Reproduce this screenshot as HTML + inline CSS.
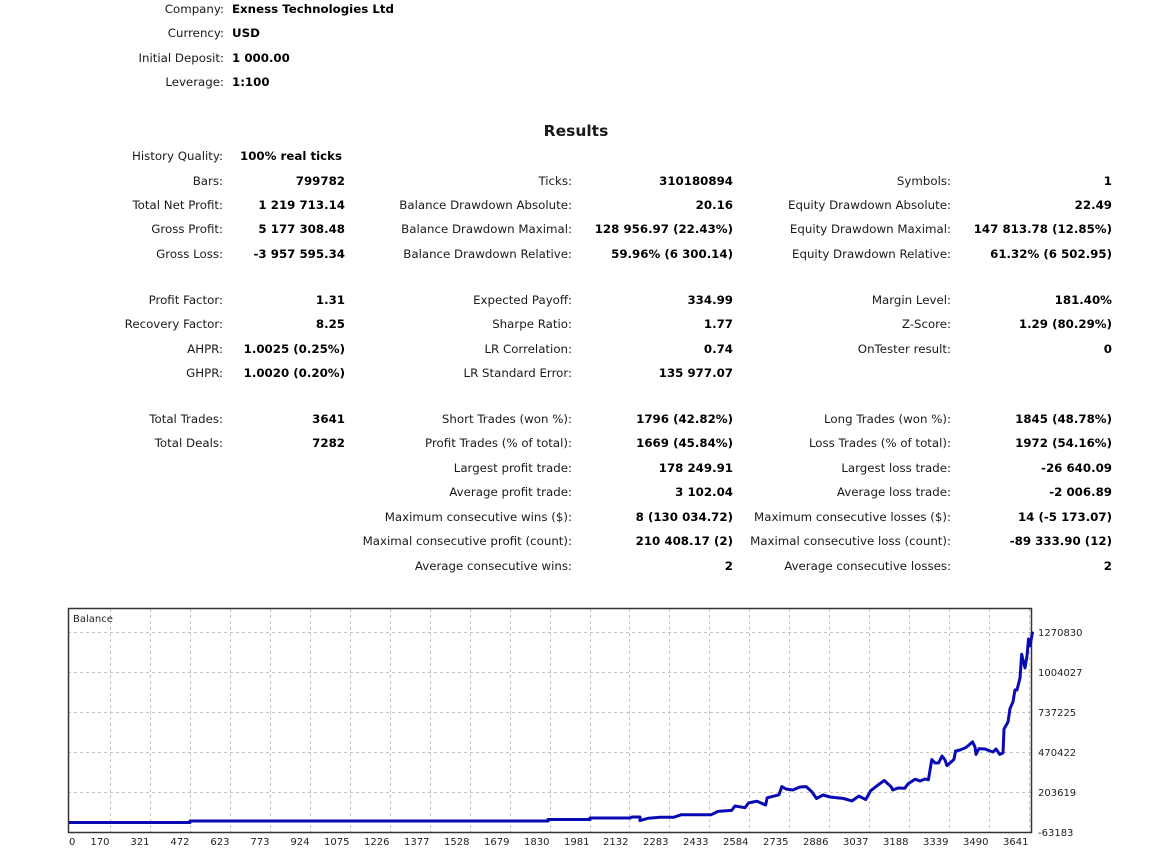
<!DOCTYPE html>
<html><head><meta charset="utf-8"><style>
body{margin:0;width:1172px;height:863px;background:#fff;position:relative;overflow:hidden;font-family:"DejaVu Sans","Liberation Sans",sans-serif;font-size:11.8px;color:#1a1a1a}
.l,.v,.vl{position:absolute;white-space:nowrap;line-height:16px}
.v,.vl{font-weight:bold;color:#000}
.h{position:absolute;font-weight:bold;font-size:15.5px;left:0;width:1152px;text-align:center;line-height:20px}
</style></head><body>
<div id="c"></div>
<div class="h" style="top:121px">Results</div>
<svg style="position:absolute;left:0;top:600px" width="1172" height="263" viewBox="0 600 1172 263">
<g stroke="#c4c4c4" stroke-width="1" stroke-dasharray="3,3">
<line x1="68" y1="632.5" x2="1031" y2="632.5"/><line x1="68" y1="672.5" x2="1031" y2="672.5"/><line x1="68" y1="712.5" x2="1031" y2="712.5"/><line x1="68" y1="752.5" x2="1031" y2="752.5"/><line x1="68" y1="792.5" x2="1031" y2="792.5"/>
<g id="vg"></g>
</g>
<rect x="68.5" y="608.5" width="963" height="224" fill="none" stroke="#333" stroke-width="1.5"/>
<text x="73" y="622" font-family="DejaVu Sans,sans-serif" font-size="10" fill="#222">Balance</text>
<polyline fill="none" stroke="#0a0ab4" stroke-width="3" stroke-linejoin="round" points="69,822.5 190,822.5 190,821 548,821 548,819.5 590,819.5 590,818 630,818 632,817 640,817 640,820.6 648.5,818.2 660,817.2 674,817.2 681,814.8 711,814.8 718,811.4 731.6,810.4 735,806 745,807.7 748.6,802.9 757,801.2 765.6,805 767.2,797.8 779,794.8 781.8,786.6 786,789 792.7,790 800,787 806.3,786.6 812,792 816.5,798.5 823,795 830,797 843.6,798.5 852,800.9 858.9,796.1 865.7,799.5 870.7,790.7 878,785 884.3,780.5 888,784 891,786.6 892.8,790 898,788 904.7,788.3 908,783.9 915,779.2 920,781 925,779 928.4,779.8 931.8,759.5 935,763 938.6,762.9 942,756.1 945,760 947,765.6 953.9,759.5 955.6,751 960,750 965.8,747.6 969,745 972.5,741.8 975,747 976,754.4 979,748.6 985,749 990,751 993,752 996,749 999.7,754.4 1003,753 1004,729 1008,722 1010,708.6 1013,701.8 1015,689.9 1017,690 1020,678 1021.7,654.3 1023,660 1025,667.9 1027,656 1028.5,639 1030,645.8 1032.6,631.6"/>
<g font-family="DejaVu Sans,sans-serif" font-size="10" fill="#222" id="lab"></g>
</svg>
<script>
var c=document.getElementById('c'),h='';
function L(t,txt,re){h+='<span class="l" style="top:'+t+'px;right:'+(1172-re)+'px">'+txt+'</span>';}
function V(t,txt,re){h+='<span class="v" style="top:'+t+'px;right:'+(1172-re)+'px">'+txt+'</span>';}
function VL(t,txt,le){h+='<span class="vl" style="top:'+t+'px;left:'+le+'px">'+txt+'</span>';}
[[1,'Company:','Exness Technologies Ltd'],[25,'Currency:','USD'],[50,'Initial Deposit:','1 000.00'],[74,'Leverage:','1:100']].forEach(function(r){L(r[0],r[1],224);VL(r[0],r[2],232);});
L(148,'History Quality:',223);VL(148,'100% real ticks',240);
var rows=[
[173,'Bars:','799782','Ticks:','310180894','Symbols:','1'],
[197,'Total Net Profit:','1 219 713.14','Balance Drawdown Absolute:','20.16','Equity Drawdown Absolute:','22.49'],
[221,'Gross Profit:','5 177 308.48','Balance Drawdown Maximal:','128 956.97 (22.43%)','Equity Drawdown Maximal:','147 813.78 (12.85%)'],
[246,'Gross Loss:','-3 957 595.34','Balance Drawdown Relative:','59.96% (6 300.14)','Equity Drawdown Relative:','61.32% (6 502.95)'],
[292,'Profit Factor:','1.31','Expected Payoff:','334.99','Margin Level:','181.40%'],
[316,'Recovery Factor:','8.25','Sharpe Ratio:','1.77','Z-Score:','1.29 (80.29%)'],
[341,'AHPR:','1.0025 (0.25%)','LR Correlation:','0.74','OnTester result:','0'],
[365,'GHPR:','1.0020 (0.20%)','LR Standard Error:','135 977.07','',''],
[411,'Total Trades:','3641','Short Trades (won %):','1796 (42.82%)','Long Trades (won %):','1845 (48.78%)'],
[435,'Total Deals:','7282','Profit Trades (% of total):','1669 (45.84%)','Loss Trades (% of total):','1972 (54.16%)'],
[460,'','','Largest profit trade:','178 249.91','Largest loss trade:','-26 640.09'],
[484,'','','Average profit trade:','3 102.04','Average loss trade:','-2 006.89'],
[509,'','','Maximum consecutive wins ($):','8 (130 034.72)','Maximum consecutive losses ($):','14 (-5 173.07)'],
[533,'','','Maximal consecutive profit (count):','210 408.17 (2)','Maximal consecutive loss (count):','-89 333.90 (12)'],
[558,'','','Average consecutive wins:','2','Average consecutive losses:','2']];
rows.forEach(function(r){var t=r[0];
if(r[1]){L(t,r[1],223);V(t,r[2],345);}
if(r[3]){L(t,r[3],572);V(t,r[4],733);}
if(r[5]){L(t,r[5],951);V(t,r[6],1112);}});
c.innerHTML=h;
var vg='',lab='',xs=['0','170','321','472','623','773','924','1075','1226','1377','1528','1679','1830','1981','2132','2283','2433','2584','2735','2886','3037','3188','3339','3490','3641'];
for(var i=1;i<=24;i++){var x=Math.round(110+(i-1)*39.96)+.5;vg+='<line x1="'+x+'" y1="609" x2="'+x+'" y2="832"/>';lab+='<text x="'+(x-1)+'" y="845" text-anchor="end">'+xs[i]+'</text>';}
lab+='<text x="69" y="845">0</text>';
[['1270830',636],['1004027',676],['737225',716],['470422',756],['203619',796],['-63183',836]].forEach(function(a){lab+='<text x="1038" y="'+a[1]+'">'+a[0]+'</text>';});
document.getElementById('vg').innerHTML=vg;document.getElementById('lab').innerHTML=lab;
</script>
</body></html>
